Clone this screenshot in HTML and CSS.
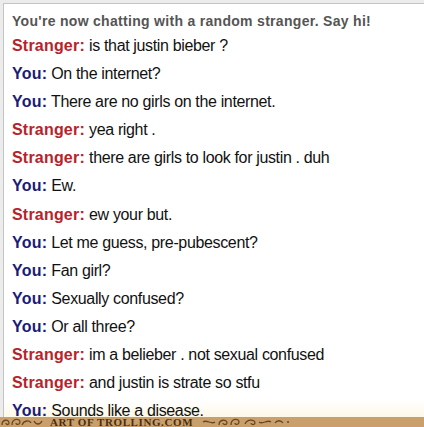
FILE: index.html
```html
<!DOCTYPE html>
<html>
<head>
<meta charset="utf-8">
<link rel="stylesheet" href="styles.css">
</head>
<body>
<div class="frame">
  <div class="log">
    <p class="status">You're now chatting with a random stranger. Say hi!</p>
    <p class="msg"><b class="s">Stranger:</b> is that justin bieber ?</p>
    <p class="msg"><b class="y">You:</b> On the internet?</p>
    <p class="msg"><b class="y">You:</b> There are no girls on the internet.</p>
    <p class="msg"><b class="s">Stranger:</b> yea right .</p>
    <p class="msg"><b class="s">Stranger:</b> there are girls to look for justin . duh</p>
    <p class="msg"><b class="y">You:</b> Ew.</p>
    <p class="msg"><b class="s">Stranger:</b> ew your but.</p>
    <p class="msg"><b class="y">You:</b> Let me guess, pre-pubescent?</p>
    <p class="msg"><b class="y">You:</b> Fan girl?</p>
    <p class="msg"><b class="y">You:</b> Sexually confused?</p>
    <p class="msg"><b class="y">You:</b> Or all three?</p>
    <p class="msg"><b class="s">Stranger:</b> im a belieber . not sexual confused</p>
    <p class="msg"><b class="s">Stranger:</b> and justin is strate so stfu</p>
    <p class="msg"><b class="y">You:</b> Sounds like a disease.</p>
  </div>
</div>
<div class="banner">
  <svg class="orn orn-left" width="46" height="10" viewBox="0 0 46 10">
    <path d="M2 8 C2 2 9 2 9 6 C9 8 6 8 6 6 M12 8 C12 1 20 1 20 5 C20 8 16 8 16 6 M22 8 C24 3 30 3 31 6 M34 4 C36 8 40 8 42 4" fill="none" stroke="#6b4520" stroke-width="1.3"/>
  </svg>
  <span class="brand">ART OF TROLLING.COM</span>
  <svg class="orn orn-right" width="92" height="10" viewBox="0 0 92 10">
    <path d="M4 5 C8 2 12 8 16 5 M20 8 C20 2 28 2 28 6 C28 8 24 8 24 6 M32 8 C32 1 40 1 40 5 C40 8 36 8 36 6 M46 7 C48 2 56 2 56 6 C56 8 52 8 52 6 M60 5 C64 8 68 2 72 5 M76 6 C78 3 82 3 84 6 M88 5 L90 5" fill="none" stroke="#6b4520" stroke-width="1.3"/>
  </svg>
</div>
</body>
</html>
```

FILE: styles.css
```css
html, body {
  margin: 0;
  padding: 0;
  width: 424px;
  height: 427px;
  overflow: hidden;
  background: #ececec;
}
body {
  display: flex;
  flex-direction: column;
  font-family: "Liberation Sans", Arial, sans-serif;
}
.frame {
  margin: 3px 0 0 3px;
  height: 413px;
  flex: none;
  border-top: 1px solid #c4c4c4;
  border-left: 1px solid #c4c4c4;
  background: linear-gradient(to bottom, #fff 0, #fff 396px, #fdf7e6 413px);
  overflow: hidden;
}
.log {
  padding: 6px 0 0 8px;
}
.status {
  margin: 0;
  font-size: 14px;
  font-weight: bold;
  color: #555;
  line-height: 22px;
  letter-spacing: 0.3px;
}
.msg {
  margin: 0;
  font-size: 16px;
  line-height: 28.1px;
  color: #111;
  letter-spacing: -0.35px;
}
.msg b { font-weight: bold; letter-spacing: 0.2px; }
.s { color: #b8222a; }
.y { color: #1b1b78; }
.banner {
  flex: none;
  height: 10px;
  background: #c9a06c;
  display: flex;
  align-items: center;
  overflow: hidden;
}
.orn { flex: none; }
.orn-left { margin-right: 4px; }
.brand {
  font-family: "Liberation Serif", "Times New Roman", serif;
  font-size: 11px;
  line-height: 10px;
  font-weight: bold;
  color: #4a2e14;
  letter-spacing: 0.6px;
  white-space: nowrap;
}
.orn-right { margin-left: 6px; }
```
